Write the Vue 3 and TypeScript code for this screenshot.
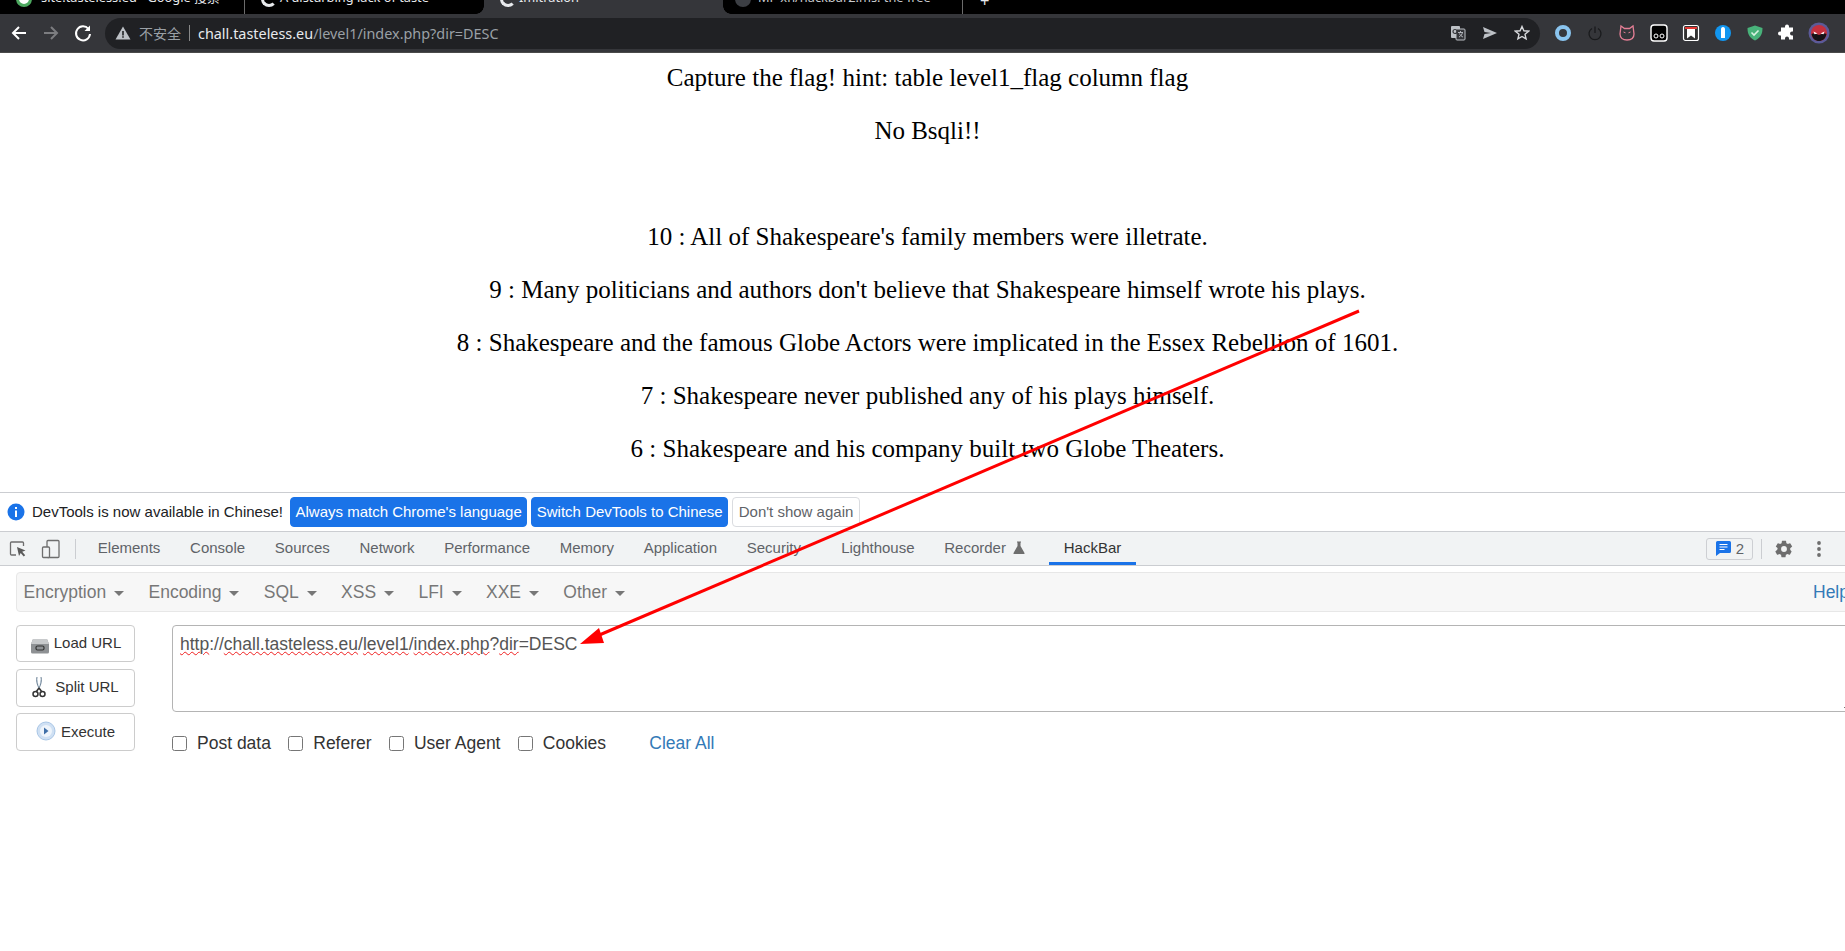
<script setup lang="ts">
const pageLines: string[] = [
  'Capture the flag! hint: table level1_flag column flag',
  'No Bsqli!!',
  '',
  "10 : All of Shakespeare's family members were illetrate.",
  "9 : Many politicians and authors don't believe that Shakespeare himself wrote his plays.",
  '8 : Shakespeare and the famous Globe Actors were implicated in the Essex Rebellion of 1601.',
  '7 : Shakespeare never published any of his plays himself.',
  '6 : Shakespeare and his company built two Globe Theaters.',
]
const panels: string[] = ['Elements', 'Console', 'Sources', 'Network', 'Performance', 'Memory', 'Application', 'Security', 'Lighthouse']
const menus: string[] = ['Encryption', 'Encoding', 'SQL', 'XSS', 'LFI', 'XXE', 'Other']
const checks: string[] = ['Post data', 'Referer', 'User Agent', 'Cookies']
</script>

<template>
  <div class="root">
    <div class="tabstrip">
      <div class="tab t1"><span class="fav g"></span><span class="tt">site:tasteless.ed - Google 搜索</span><span class="x">×</span></div>
      <div class="tab t2"><span class="fav w"></span><span class="tt">A disturbing lack of taste</span><span class="x">×</span></div>
      <div class="tab t3"><span class="fav w"></span><span class="tt">Imitration</span><span class="x">×</span></div>
      <div class="tab t4"><span class="fav d"></span><span class="tt">MF-xn/hackbar2.ms: the free</span><span class="x">×</span></div>
      <span class="plus">+</span>
    </div>
    <div class="toolbar">
      <svg class="nav" width="20" height="20" viewBox="0 0 20 20"><path d="M17 10H5M10 4l-6 6 6 6" fill="none" stroke="#fff" stroke-width="2"/></svg>
      <svg class="nav" width="20" height="20" viewBox="0 0 20 20"><path d="M3 10h12M10 4l6 6-6 6" fill="none" stroke="#7c7d80" stroke-width="2"/></svg>
      <svg class="nav" width="20" height="20" viewBox="0 0 20 20"><path d="M15.5 6A7 7 0 1 0 17 11" fill="none" stroke="#fff" stroke-width="2"/><path d="M17 2.5V8h-5.5z" fill="#fff"/></svg>
      <div class="omni">
        <svg width="16" height="16" viewBox="0 0 16 16"><path d="M8 1.5 15.5 14.5H.5z" fill="#bdc1c6"/><path d="M7.2 6h1.6v4.5H7.2zM7.2 11.3h1.6v1.5H7.2z" fill="#202124"/></svg>
        <span class="insecure">不安全</span>
        <span class="sep"></span>
        <span class="url"><b>chall.tasteless.eu</b>/level1/index.php?dir=DESC</span>
        <span class="grow"></span>
        <svg class="oi" width="16" height="16" viewBox="0 0 16 16"><rect x="1" y="1" width="9" height="12" rx="1" fill="#bdc1c6"/><rect x="6" y="4" width="9" height="11" rx="1" fill="#35363a" stroke="#bdc1c6"/><path d="M8 7.5h5M10.500 6v1.500M9 12c2-1 3-2.500 3.500-4.500M9.500 8.500c.6 1.600 1.800 2.900 3.500 3.500" fill="none" stroke="#bdc1c6" stroke-width=".9"/><circle cx="5" cy="6.500" r="2" fill="none" stroke="#35363a" stroke-width="1.200"/></svg>
        <svg class="oi" width="16" height="16" viewBox="0 0 16 16"><path d="M1 2l14 6-14 6 1.500-5L9 8 2.500 7z" fill="#bdc1c6"/></svg>
        <svg class="oi" width="16" height="16" viewBox="0 0 16 16"><path d="M8 1.500l1.900 4.300 4.700.4-3.600 3.100 1.100 4.600L8 11.500l-4.100 2.400L5 9.300 1.400 6.200l4.700-.4z" fill="none" stroke="#d7d9dc" stroke-width="1.400"/></svg>
      </div>
      <div class="exts">
        <svg width="18" height="18" viewBox="0 0 18 18"><circle cx="9" cy="9" r="6" fill="none" stroke="#8ac4ee" stroke-width="4"/></svg>
        <svg width="18" height="18" viewBox="0 0 18 18"><path d="M6 4.500a6 6 0 1 0 6 0" fill="none" stroke="#191a1c" stroke-width="1.300"/><path d="M9 2.500V9" stroke="#191a1c" stroke-width="1.300"/></svg>
        <svg width="18" height="18" viewBox="0 0 18 18"><path d="M3 2l3.500 2.500h5L15 2l1 8c0 4-3 6-7 6s-7-2-7-6z" fill="none" stroke="#e57f96" stroke-width="1.300"/><path d="M5.500 8l2 .8M12.500 8l-2 .8" stroke="#e57f96"/></svg>
        <svg width="18" height="18" viewBox="0 0 18 18"><rect x="1" y="1" width="16" height="16" rx="3" fill="#000" stroke="#fff" stroke-width="1.400"/><circle cx="6" cy="12" r="2" fill="none" stroke="#fff"/><circle cx="12" cy="12" r="2" fill="none" stroke="#fff"/></svg>
        <svg width="18" height="18" viewBox="0 0 18 18"><rect x="1.500" y="1.500" width="15" height="15" rx="2" fill="#333" stroke="#fff" stroke-width="1.200"/><path d="M5 3h8v11.500l-4-3-4 3z" fill="#fff"/><path d="M3 3h12v2H3z" fill="#e53935"/></svg>
        <svg width="18" height="18" viewBox="0 0 18 18"><circle cx="9" cy="9" r="8" fill="#1296f0"/><path d="M9 3c1.500 0 2 1 2 2.500V14H7V5.500C7 4 7.500 3 9 3z" fill="#fff"/></svg>
        <svg width="18" height="18" viewBox="0 0 18 18"><path d="M9 1.500l7.500 2.500c0 6-2 10-7.500 12.500C3.500 14 1.500 10 1.500 4z" fill="#48b27a"/><path d="M5.500 8.500L8 11l4.500-4.500" fill="none" stroke="#d8f2e2" stroke-width="1.600"/></svg>
        <svg width="18" height="18" viewBox="0 0 18 18"><path d="M7 3a2 2 0 0 1 4 0v1h4v4h-1a2 2 0 0 0 0 4h1v4h-4v-1a2 2 0 0 0-4 0v1H3v-4H2a2 2 0 0 1 0-4h1V4h4z" fill="#fff" transform="translate(0 -.5)"/></svg>
        <svg class="avatar" width="22" height="22" viewBox="0 0 22 22"><circle cx="11" cy="11" r="10.500" fill="#5b5a98"/><circle cx="11" cy="11" r="8" fill="#c4303e"/><path d="M3.500 12c3-1 5 0 7.500 1 2.500-1 4.500-2 7.500-1-1 5-4 7-7.500 7s-6.500-2-7.500-7z" fill="#151216"/><path d="M5.500 9.500l4 2-3 .8zM16.500 9.500l-4 2 3 .8z" fill="#fff"/></svg>
      </div>
    </div>
    <div class="page">
      <p v-for="(l, i) in pageLines" :key="i" class="line">{{ l || '\u00a0' }}</p>
    </div>
    <div class="infobar">
      <svg width="18" height="18" viewBox="0 0 18 18"><circle cx="9" cy="9" r="8.500" fill="#1a73e8"/><path d="M8 4h2v2H8zM8 7.500h2V14H8z" fill="#fff"/></svg>
      <span class="infotxt">DevTools is now available in Chinese!</span>
      <button class="ib blue">Always match Chrome's language</button>
      <button class="ib blue">Switch DevTools to Chinese</button>
      <button class="ib plain">Don't show again</button>
    </div>
    <div class="dttabs">
      <svg class="dti d1" width="20" height="20" viewBox="0 0 20 20"><path d="M8 16H3.500a1 1 0 0 1-1-1V4a1 1 0 0 1 1-1h11a1 1 0 0 1 1 1v3" fill="none" stroke="#6e6e6e" stroke-width="1.300"/><path d="M9 8l8.500 3.500-3.300 1.300 3 3.500-1.500 1.300-3-3.500-1.700 2.900z" fill="#5a5a5a"/></svg>
      <svg class="dti d2" width="20" height="20" viewBox="0 0 20 20"><rect x="6" y="1.500" width="12" height="17" rx="1" fill="none" stroke="#6e6e6e" stroke-width="1.300"/><rect x="1.500" y="8" width="7" height="10.500" rx="1" fill="#f1f3f4" stroke="#6e6e6e" stroke-width="1.300"/></svg>
      <span class="vsep first"></span>
      <span v-for="p in panels" :key="p" class="dtab" :class="{ sec: p === 'Security' }">{{ p }}</span>
      <span class="dtab rec">Recorder
        <svg width="12" height="13" viewBox="0 0 12 13"><path d="M4 .5h4v1H7.500v3.500L11.500 12a.7.7 0 0 1-.6 1H1.100a.7.7 0 0 1-.6-1L4.500 5V1.500H4z" fill="#6e6e6e"/></svg>
      </span>
      <span class="dtab active">HackBar</span>
      <span class="grow"></span>
      <span class="issues">
        <svg width="15" height="15" viewBox="0 0 15 15"><path d="M1.500 0h12A1.500 1.500 0 0 1 15 1.500v9a1.500 1.500 0 0 1-1.500 1.500H4L0 15V1.500A1.500 1.500 0 0 1 1.500 0z" fill="#1a73e8"/><path d="M3.500 3.500h8M3.500 6h8M3.500 8.500h5" stroke="#fff" stroke-width="1.100"/></svg>
        <span>2</span>
      </span>
      <span class="vsep second"></span>
      <svg class="gear" width="20" height="20" viewBox="0 0 24 24"><path fill="#6e6e6e" d="M19.400 13c.04-.32.100-.66.100-1s-.03-.68-.08-1l2.100-1.650a.5.500 0 0 0 .12-.64l-2-3.460a.5.500 0 0 0-.61-.22l-2.490 1a7.300 7.300 0 0 0-1.690-.98l-.38-2.650A.49.490 0 0 0 14 2h-4a.49.490 0 0 0-.49.420l-.38 2.650c-.61.250-1.170.590-1.690.980l-2.490-1a.49.490 0 0 0-.61.220l-2 3.460a.49.490 0 0 0 .12.640L4.570 11c-.4.320-.7.650-.7 1s.3.680.07 1l-2.110 1.650a.5.500 0 0 0-.12.640l2 3.460c.12.220.39.300.61.220l2.490-1c.52.400 1.080.730 1.690.980l.38 2.650c.4.240.25.420.49.420h4c.25 0 .45-.18.49-.42l.38-2.650c.61-.25 1.170-.59 1.690-.98l2.490 1c.23.090.49 0 .61-.22l2-3.460a.5.500 0 0 0-.12-.64zM12 15.500a3.500 3.500 0 1 1 0-7 3.500 3.500 0 0 1 0 7z"/></svg>
      <svg class="kebab" width="6" height="18" viewBox="0 0 6 18"><circle cx="3" cy="3" r="1.900" fill="#6e6e6e"/><circle cx="3" cy="9" r="1.900" fill="#6e6e6e"/><circle cx="3" cy="15" r="1.900" fill="#6e6e6e"/></svg>
    </div>
    <div class="hackbar">
      <div class="menubar">
        <span v-for="m in menus" :key="m" class="menu">{{ m }}<i class="caret"></i></span>
        <span class="grow"></span>
        <span class="help">Help</span>
      </div>
      <div class="work">
        <div class="btns">
          <button class="hb h1">
            <svg class="ic1" width="20" height="18" viewBox="0 0 20 18"><path d="M3 3h14l2 5v8a1.500 1.500 0 0 1-1.500 1.500h-15A1.500 1.500 0 0 1 1 16V8z" fill="#8e9194"/><path d="M3 3h14l2 5H1z" fill="#c8cacc"/><rect x="6" y="10" width="8" height="4" rx="1.500" fill="none" stroke="#333" stroke-width="1.200"/></svg>
            <span>Load URL</span>
          </button>
          <button class="hb h2">
            <svg class="ic2" width="14" height="22" viewBox="0 0 14 22"><path d="M5 1c-1 3 0 8 2 11M9 1c1 3 0 8-2 11" fill="#c7d6e2" stroke="#6f8497"/><circle cx="3.500" cy="18" r="2.500" fill="none" stroke="#333" stroke-width="1.500"/><circle cx="10.500" cy="18" r="2.500" fill="none" stroke="#333" stroke-width="1.500"/><path d="M7 12l-3 4M7 12l3 4" stroke="#333" stroke-width="1.500"/></svg>
            <span>Split URL</span>
          </button>
          <button class="hb h3">
            <svg width="20" height="20" viewBox="0 0 20 20"><circle cx="10" cy="10" r="9" fill="#cfe0f3" stroke="#a9c6e6"/><circle cx="10" cy="10" r="6" fill="#eef4fb"/><path d="M8 6.500l4.500 3.500L8 13.500z" fill="#3f6fa8"/></svg>
            <span>Execute</span>
          </button>
        </div>
        <div class="right">
          <div class="ta"><span class="sp">http</span>://<span class="sp">chall.tasteless.eu</span>/<span class="sp">level1</span>/<span class="sp">index.php</span>?<span class="sp">dir</span>=DESC<i class="grip"></i></div>
          <div class="opts">
            <label v-for="c in checks" :key="c" class="opt"><span class="box"></span>{{ c }}</label>
            <span class="clear">Clear All</span>
          </div>
        </div>
      </div>
    </div>
    <svg class="arrow" width="1845" height="951" viewBox="0 0 1845 951">
      <path d="M1359 311 597 636" stroke="#ff0000" stroke-width="3" fill="none"/>
      <path d="M580 644 599 628 604 643z" fill="#ff0000"/>
    </svg>
  </div>
</template>

<style>
html, body { margin: 0; background: #fff; overflow: hidden; }
</style>

<style scoped>
.root { position: relative; width: 1845px; height: 951px; overflow: hidden; background: #fff; font-family: "Liberation Sans", Arial, sans-serif; }
.grow { flex: 1; }
.tabstrip { height: 14px; background: #000; display: flex; overflow: hidden; position: relative; }
.tab { position: relative; height: 14px; box-sizing: border-box; color: #e8eaed; font-size: 12.8px; font-family: "Noto Sans", "Noto Sans CJK SC", sans-serif; flex: none; }
.tab .tt { position: absolute; top: -11px; white-space: nowrap; line-height: 17px; }
.tab .fav { position: absolute; left: 16px; top: -9px; width: 16px; height: 16px; border-radius: 50%; box-sizing: border-box; }
.fav.g { border: 3px solid #4ca85f; background: #fff; }
.fav.w { border: 3px solid #e8eaed; border-right-color: transparent; }
.fav.d { background: #3c3f44; left: 12px !important; }
.tab .x { position: absolute; right: 13px; top: -12px; font-size: 15px; line-height: 17px; }
.t1 { width: 245px; border-right: 1px solid #6b6b6b; }
.t1 .tt { left: 41px; }
.t2 { width: 239px; }
.t2 .tt { left: 35px; }
.t3 { width: 239px; background: #35363a; }
.t3 .tt { left: 35px; }
.t3::before, .t3::after { content: ""; position: absolute; bottom: 0; width: 8px; height: 8px; z-index: 2; }
.t3::before { left: -8px; background: radial-gradient(circle at 0 0, #000 7.5px, #35363a 8px); }
.t3::after { right: -8px; background: radial-gradient(circle at 100% 0, #000 7.500px, #35363a 8px); }
.t4 { width: 240px; border-right: 1px solid #6b6b6b; }
.t4 .tt { left: 35px; color: #c7c9cc; }
.plus { color: #e8eaed; font-size: 16px; margin-left: 17px; line-height: 2px; }
.toolbar { height: 38px; background: #35363a; border-bottom: 1px solid #4a4a4a; display: flex; align-items: center; padding-left: 9px; box-sizing: content-box; }
.nav { margin-right: 12px; flex: none; }
.omni { width: 1435px; height: 31px; background: #202124; border-radius: 16px; display: flex; align-items: center; padding: 0 10px 0 10px; box-sizing: border-box; flex: none; }
.insecure { color: #9aa0a6; font-size: 14px; margin-left: 8px; font-family: "Noto Sans CJK SC", sans-serif; }
.sep { width: 1px; height: 16px; background: #888; margin: 0 8px 0 8px; }
.url { color: #9aa0a6; font-size: 14.4px; font-family: "Noto Sans", sans-serif; }
.url b { color: #e8eaed; font-weight: 400; }
.oi { margin-left: 16px; }
.exts { display: flex; align-items: center; gap: 14px; margin-left: 14px; }
.avatar { margin-left: -2px; }
.page { height: 439px; overflow: hidden; text-align: center; width: 1855px; padding-top: 11px; box-sizing: border-box; }
.line { margin: 0 0 25px; font-family: "Liberation Serif", serif; font-size: 25px; line-height: 28px; color: #000; white-space: nowrap; }
.infobar { height: 40px; box-sizing: border-box; border-top: 1px solid #cbcdd1; border-bottom: 1px solid #cbcdd1; display: flex; align-items: center; padding-left: 7px; background: #fff; }
.infotxt { font-size: 15px; color: #202124; margin: 0 7px 0 7px; white-space: nowrap; position: relative; top: -1px; }
.ib { height: 30px; font: 15px "Liberation Sans", sans-serif; border-radius: 4px; padding: 0 4.5px 2px; margin-right: 4px; white-space: nowrap; }
.blue { background: #1a73e8; border: 1px solid #1a73e8; color: #fff; }
.plain { background: #fff; border: 1px solid #dadce0; color: #5f6368; padding: 0 5.5px 2px; }
.dttabs { height: 34px; box-sizing: border-box; background: #f1f3f4; border-bottom: 1px solid #cbcdd1; display: flex; align-items: center; font-size: 15px; color: #5f6368; padding-left: 8px; }
.dti { flex: none; }
.d1 { margin-right: 13px; }
.d2 { margin-right: 14px; }
.vsep { width: 1px; height: 20px; background: #cbcdd1; flex: none; }
.first { margin: 0 7px 0 0; }
.second { margin: 0 12px 0 8px; }
.dtab { padding: 0 14.85px 2px; white-space: nowrap; display: inline-flex; align-items: center; gap: 7px; height: 33px; box-sizing: border-box; }
.sec { padding-right: 25.4px; }
.active { color: #333; border-bottom: 3px solid #1a73e8; height: 33px; padding: 1px 15px 0; margin-left: 9px; }
.issues { display: inline-flex; align-items: center; gap: 5px; height: 22px; box-sizing: border-box; padding: 0 8px 0 9px; border: 1px solid #cdcfd3; border-radius: 3px; font-size: 15px; color: #5f6368; }
.gear { flex: none; }
.kebab { margin: 0 23px 0 22px; flex: none; }
.hackbar { width: 1858px; padding: 6px 0 0 16px; box-sizing: border-box; background: #fff; }
.menubar { height: 40px; box-sizing: border-box; background: #f7f7f7; border: 1px solid #e7e7e7; border-radius: 4px; display: flex; align-items: center; padding-left: 6.5px; font-size: 17.5px; color: #777; }
.menu { display: inline-flex; align-items: center; margin-right: 24.3px; }
.caret { display: inline-block; width: 0; height: 0; border-left: 5px solid transparent; border-right: 5px solid transparent; border-top: 5px solid #777; margin-left: 8px; margin-top: 3px; }
.help { color: #337ab7; margin-right: 11px; width: 33px; }
.work { display: flex; margin-top: 13px; }
.btns { width: 119px; margin-right: 37px; flex: none; display: flex; flex-direction: column; }
.hb { background: #fff; border: 1px solid #ccc; border-radius: 4px; font: 15px "Liberation Sans", sans-serif; color: #333; display: flex; align-items: center; justify-content: center; gap: 4px; padding: 0 0 2px; width: 119px; }
.h1 { height: 37px; }
.ic1 { position: relative; top: 2px; }
.h2 { height: 38px; gap: 9px; margin-top: 7px; padding-bottom: 4px; }
.ic2 { position: relative; top: 1px; }
.h3 { height: 38px; gap: 5px; margin-top: 6px; }
.right { flex: 1; }
.ta { position: relative; height: 87px; box-sizing: border-box; border: 1px solid #b4b4b4; border-radius: 4px; padding: 8px 7px; font-size: 17.5px; line-height: 20px; color: #555; white-space: nowrap; }
.sp { text-decoration: underline wavy #f02020 1px; text-underline-offset: 1px; }
.grip { position: absolute; right: 11px; bottom: 3px; width: 2px; height: 1px; background: #777; }
.opts { display: flex; align-items: center; margin-top: 18px; font-size: 17.5px; color: #333; height: 26px; }
.opt { display: inline-flex; align-items: center; margin-right: 17.3px; white-space: nowrap; }
.box { width: 15px; height: 15px; box-sizing: border-box; border: 1.500px solid #767676; border-radius: 2.500px; margin-right: 10px; background: #fff; }
.clear { color: #337ab7; margin-left: 26px; }
.arrow { position: absolute; left: 0; top: 0; pointer-events: none; }
</style>
